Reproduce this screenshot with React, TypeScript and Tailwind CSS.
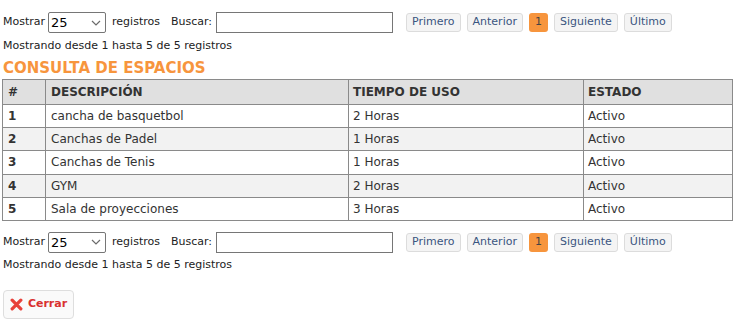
import React from "react";

const rows = [
  ["1", "cancha de basquetbol", "2 Horas", "Activo"],
  ["2", "Canchas de Padel", "1 Horas", "Activo"],
  ["3", "Canchas de Tenis", "1 Horas", "Activo"],
  ["4", "GYM", "2 Horas", "Activo"],
  ["5", "Sala de proyecciones", "3 Horas", "Activo"],
];

function Controls({ gap }: { gap: number }) {
  return (
    <div>
      <div className="flex items-center h-[21px]">
        <span>Mostrar</span>
        <div className="ml-[3px] w-[58px] h-[21px] border border-[#767676] rounded-[2px] flex items-center justify-between pl-[2px] pr-[4px] bg-white">
          <span className="text-[13px] leading-none text-black">25</span>
          <svg width="10" height="6" viewBox="0 0 10 6">
            <path d="M1 1l4 4 4-4" fill="none" stroke="#6b6b6b" strokeWidth="1.2" />
          </svg>
        </div>
        <span className="ml-[6px]">registros</span>
        <span className="ml-[11px]">Buscar:</span>
        <div className="ml-[4px] w-[177px] h-[21px] border border-[#767676] bg-white" />
        <div className="ml-[13px] flex items-center gap-[6px]">
          {["Primero", "Anterior"].map((t) => (
            <span key={t} className="h-[19px] px-[5px] flex items-center border border-[#dcdcdc] rounded-[3px] bg-[#f4f4f4] text-[#3a5580]">{t}</span>
          ))}
          <span className="h-[19px] w-[19px] flex items-center justify-center rounded-[3px] bg-[#f7953d] text-[#444]">1</span>
          {["Siguiente", "Último"].map((t) => (
            <span key={t} className="h-[19px] px-[5px] flex items-center border border-[#dcdcdc] rounded-[3px] bg-[#f4f4f4] text-[#3a5580]">{t}</span>
          ))}
        </div>
      </div>
      <div className={`${gap === 6 ? "mt-[6px]" : "mt-[5px]"} h-[14px] leading-[14px]`}>Mostrando desde 1 hasta 5 de 5 registros</div>
    </div>
  );
}

export default function App() {
  return (
    <div className="bg-white w-[737px] h-[326px] text-[11px] text-[#222] px-[3px] pt-[12px]" style={{ fontFamily: '"DejaVu Sans", Verdana, sans-serif' }}>
      <Controls gap={6} />
      <div className="mt-[6px] text-[15px] font-bold text-[#f7953d] leading-[18px]">CONSULTA DE ESPACIOS</div>
      <table className="-ml-[1px] mt-[2px] w-[731px] border-collapse text-[12px] text-[#333]">
        <thead>
          <tr className="bg-[#e0e0e0] h-[25px]">
            <th className="border border-[#8a8a8a] text-left font-bold px-[5px] w-[43px]">#</th>
            <th className="border border-[#8a8a8a] text-left font-bold px-[5px] w-[303px]">DESCRIPCIÓN</th>
            <th className="border border-[#8a8a8a] text-left font-bold px-[4px] w-[235px]">TIEMPO DE USO</th>
            <th className="border border-[#8a8a8a] text-left font-bold px-[4px]">ESTADO</th>
          </tr>
        </thead>
        <tbody>
          {rows.map((r, i) => (
            <tr key={r[0]} className={`h-[23.2px] ${i % 2 === 1 ? "bg-[#f2f2f2]" : "bg-white"}`}>
              <td className="border border-[#8a8a8a] px-[5px] font-bold">{r[0]}</td>
              <td className="border border-[#8a8a8a] px-[5px]">{r[1]}</td>
              <td className="border border-[#8a8a8a] px-[4px]">{r[2]}</td>
              <td className="border border-[#8a8a8a] px-[4px]">{r[3]}</td>
            </tr>
          ))}
        </tbody>
      </table>
      <div className="mt-[11px]">
        <Controls gap={5} />
      </div>
      <div className="mt-[18px] w-[71px] h-[29px] border border-[#dedede] rounded-[4px] bg-[#fafafa] flex items-center justify-center gap-[5px] text-[#d9302f] font-bold">
        <svg width="13" height="13" viewBox="0 0 12 12">
          <path d="M2 2l8 8M10 2l-8 8" stroke="#e8413a" strokeWidth="3" strokeLinecap="round" />
        </svg>
        <span>Cerrar</span>
      </div>
    </div>
  );
}
